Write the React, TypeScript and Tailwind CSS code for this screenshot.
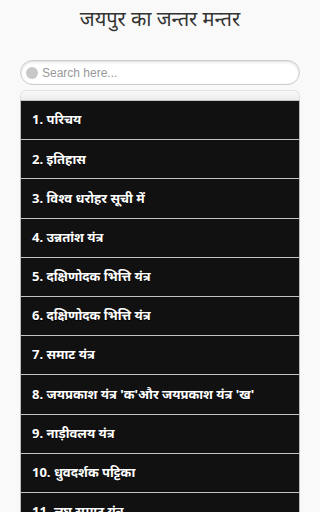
const items = [
  '1. परिचय',
  '2. इतिहास',
  '3. विश्व धरोहर सूची में',
  '4. उन्नतांश यंत्र',
  '5. दक्षिणोदक भित्ति यंत्र',
  '6. दक्षिणोदक भित्ति यंत्र',
  '7. समाट यंत्र',
  "8. जयप्रकाश यंत्र 'क'और जयप्रकाश यंत्र 'ख'",
  '9. नाड़ीवलय यंत्र',
  '10. धुवदर्शक पट्टिका',
  '11. लघु सम्राट यंत्र',
];

export default function App() {
  return (
    <div
      className="h-[512px] overflow-hidden bg-[#f9f9f9]"
      style={{ fontFamily: '"Noto Sans", "Liberation Sans", sans-serif' }}
    >
      {/* Title */}
      <h1 className="pt-[6px] text-center text-[20px] leading-[26px] text-[#333]">
        जयपुर का जन्तर मन्तर
      </h1>

      {/* Search */}
      <div className="mx-[20px] mt-[28px] flex h-[25px] items-center gap-[4px] rounded-full border border-[#ccc] bg-white px-[5px] shadow-[inset_0_1px_3px_rgba(0,0,0,0.15)]">
        <span className="h-[12px] w-[12px] shrink-0 rounded-full bg-[#c8c8c8]" />
        <span className="text-[12px] text-[#999]" style={{ fontFamily: '"Liberation Sans", Arial, sans-serif' }}>
          Search here...
        </span>
      </div>

      {/* List */}
      <div className="mx-[20px] mt-[5px]">
        <div className="h-[10px] rounded-t-[6px] border border-b-0 border-[#e2e2e2] bg-gradient-to-b from-[#fafafa] to-[#ececec]" />
        <ul className="border-x border-[#bbb]">
          {items.map((t, i) => (
            <li
              key={i}
              className="flex h-[39.2px] items-center border-t-[1.5px] border-[#c4c4c4] bg-[#111] pl-[11px] text-[13px] font-bold text-white [text-shadow:0_1px_0_#000]"
            >
              {t}
            </li>
          ))}
        </ul>
      </div>
    </div>
  );
}
